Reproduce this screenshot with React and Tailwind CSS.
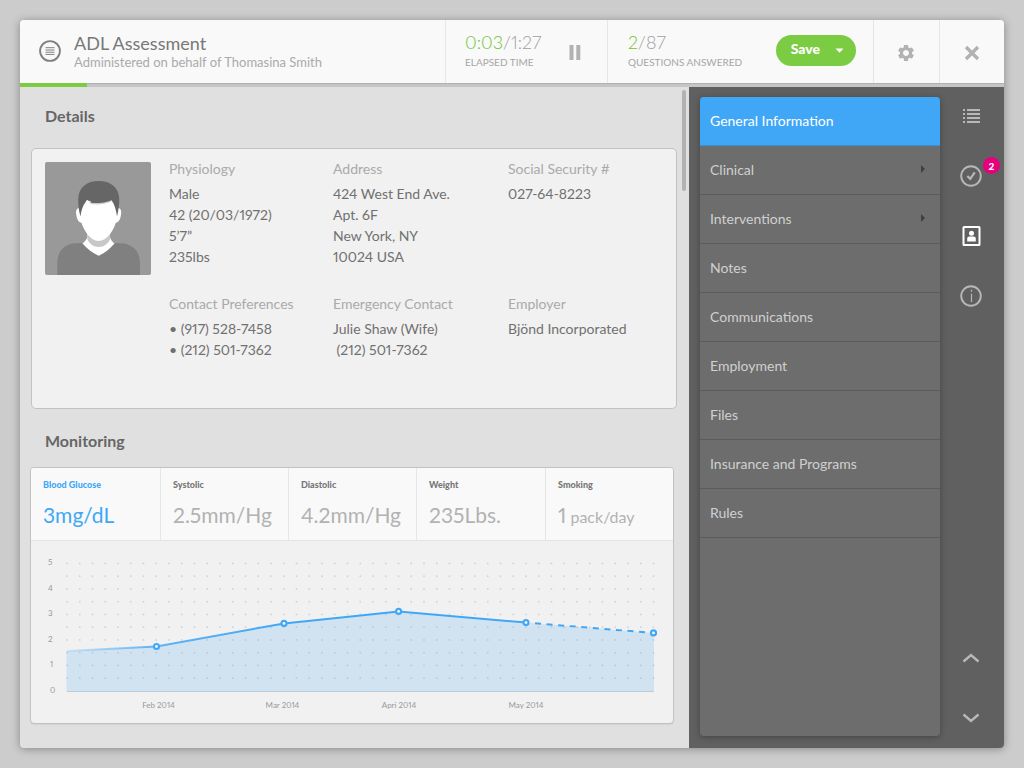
import React from "react";
import { MdSettings } from "react-icons/md";

const details = [
  { label: "Physiology", lines: ["Male", "42 (20/03/1972)", "5’7”", "235lbs"] },
  { label: "Address", lines: ["424 West End Ave.", "Apt. 6F", "New York, NY", "10024 USA"] },
  { label: "Social Security #", lines: ["027-64-8223"] },
  { label: "Contact Preferences", lines: ["• (917) 528-7458", "• (212) 501-7362"] },
  { label: "Emergency Contact", lines: ["Julie Shaw (Wife)", "\u00a0(212) 501-7362"] },
  { label: "Employer", lines: ["Bjönd Incorporated"] },
];

const metrics = [
  { label: "Blood Glucose", value: "3mg/dL", active: true },
  { label: "Systolic", value: "2.5mm/Hg" },
  { label: "Diastolic", value: "4.2mm/Hg" },
  { label: "Weight", value: "235Lbs." },
  { label: "Smoking", value: "1", unit: "pack/day" },
];

const sections = [
  { label: "General Information", active: true },
  { label: "Clinical", nested: true },
  { label: "Interventions", nested: true },
  { label: "Notes" },
  { label: "Communications" },
  { label: "Employment" },
  { label: "Files" },
  { label: "Insurance and Programs" },
  { label: "Rules" },
];

function Header() {
  return (
    <header className="flex h-[63px] items-stretch rounded-t-[4px] bg-[#f9f9f9]">
      <div className="flex min-w-0 flex-1 items-center gap-[13px] pb-[2px] pl-[19px]">
        <button type="button" aria-label="Open menu" className="shrink-0">
          <svg width="22" height="22" viewBox="0 0 22 22" fill="none" stroke="#808080">
            <circle cx="11" cy="11" r="9.9" strokeWidth="1.9" />
            <path d="M6.5 7.7h9M6.5 10h9M6.5 12.2h9M6.5 14.4h9" strokeWidth="1" />
          </svg>
        </button>
        <div className="min-w-0 pt-[3px]">
          <h1 className="truncate text-[18px] leading-[20px] text-[#777]">ADL Assessment</h1>
          <p className="truncate text-[13px] leading-[18px] text-[#aaa]">
            Administered on behalf of Thomasina Smith
          </p>
        </div>
      </div>

      <div className="flex w-[162px] items-center justify-between border-l border-[#e6e6e6] pr-[26px] pl-[19px]">
        <Stat value="0:03" total="1:27" label="Elapsed Time" />
        <button type="button" aria-label="Pause" className="pt-[2px]">
          <svg width="12" height="15" viewBox="0 0 12 15" fill="#b2b2b2">
            <rect x="0.5" width="4" height="15" />
            <rect x="7.3" width="4" height="15" />
          </svg>
        </button>
      </div>

      <div className="flex w-[266px] items-center justify-between border-l border-[#e6e6e6] pr-[17px] pl-[20px]">
        <Stat value="2" total="87" label="Questions Answered" />
        <div className="mb-[2px] flex h-[31px] items-stretch rounded-full bg-[#7bcc43] text-white">
          <button type="button" className="rounded-l-full pb-[4px] pl-[15px] text-[14px] font-black">
            Save
          </button>
          <button type="button" aria-label="More save options" className="rounded-r-full pr-[12px] pl-[15px]">
            <svg width="9" height="5" viewBox="0 0 9 5" fill="currentColor">
              <path d="M0.5 0.5h8L4.5 4.8z" />
            </svg>
          </button>
        </div>
      </div>

      <button
        type="button"
        aria-label="Settings"
        className="flex w-[66px] items-center justify-center border-l border-[#e6e6e6] pt-[2px] pr-px text-[#b2b2b2]"
      >
        <MdSettings size={20} />
      </button>
      <button
        type="button"
        aria-label="Close"
        className="flex w-[65px] items-center justify-center border-l border-[#e6e6e6] pt-[2px] pr-px"
      >
        <svg width="16" height="16" viewBox="0 0 16 16" stroke="#b2b2b2" strokeWidth="3.4">
          <path d="M2 2l12 12M14 2L2 14" />
        </svg>
      </button>
    </header>
  );
}

function Stat({ value, total, label }) {
  return (
    <div className="pb-px">
      <p className="text-[18px] leading-[22px] font-light text-[#a0a0a0] proportional-nums">
        <span className="text-[#6cc52f]">{value}</span>/{total}
      </p>
      <p className="text-[10px] leading-[18px] whitespace-nowrap text-[#a6a6a6] uppercase">{label}</p>
    </div>
  );
}

function Avatar() {
  return (
    <svg
      role="img"
      aria-label="Patient portrait"
      className="mt-[4px] shrink-0 rounded-[2px]"
      width="106"
      height="113"
      viewBox="0 0 106 113"
    >
      <rect width="106" height="113" fill="#999" />
      <path d="M12.3 113V101C12.3 90 19 81.5 31 81.3L40 81H67L76 81.3C88 81.5 95 90 95 101V113Z" fill="#808080" />
      <path d="M42.3 71V75C41.5 78 39.5 80 37.5 81.5C42 87 48 91 53.7 93.7C59.5 91 65 87 69.5 81.5C67.5 80 65.5 78 65 75V71Z" fill="#fff" />
      <path d="M42.3 72V77C44 81.500 48.500 85 53.700 85S63.500 81.500 65 77V72Z" fill="#c8c8c8" />
      <path d="M34.500 46C31.500 46 30.700 49 31.200 52C31.700 56 33 60.500 36.500 60.800C39 69 45.500 79 53.700 79S68.300 69 70.800 60.800C74.300 60.500 75.600 56 76.100 52C76.600 49 75.800 46 72.800 46L68 34H39Z" fill="#fff" />
      <path d="M44 40L66 38L66.500 39.500C60 42.500 51 43 46 42Z" fill="#ccc" />
      <path d="M35.400 54.500C33.500 47 33 41 33.300 36C34 25 42 19 53.700 19S73.500 25 74.200 36C74.500 41 73.800 47 72 54.500C71.200 48 69.500 42 66.500 38.200C60.500 40.800 52 41.500 46.200 40.800L45 38.500L44.600 39.600L42 37.800L40.500 40.200C37.800 43.500 36.200 49 35.400 54.500Z" fill="#666" />
    </svg>
  );
}

function Details() {
  return (
    <section>
      <h2 className="pl-[14px] text-[16px] leading-[20px] font-bold text-[#666]">Details</h2>
      <div className="mt-[22px] mr-[1px] flex gap-[18px] rounded-[5px] border border-[#c2c2c2] bg-[#f1f1f1] px-[13px] pt-[9px] pb-[48px]">
        <Avatar />
        <dl className="grid min-w-0 flex-1 grid-cols-[164px_175px_1fr] gap-y-[26px] text-[14px] leading-[21px] proportional-nums">
          {details.map((d) => (
            <div key={d.label}>
              <dt className="mb-[4px] text-[#aaa]">{d.label}</dt>
              {d.lines.map((line) => (
                <dd key={line} className="text-[#707070]">
                  {line}
                </dd>
              ))}
            </div>
          ))}
        </dl>
      </div>
    </section>
  );
}

const STEP = 12.75;
const columns = Array.from({ length: 47 }, (_, i) => 36 + i * STEP);
const rows = Array.from({ length: 10 }, (_, i) => 22.4 + i * STEP);
const points = [
  [125.5, 105.5],
  [253, 82.4],
  [367.6, 70.4],
  [495, 81.6],
  [622.5, 91.9],
];
const scale = [
  [5, 17, 24],
  [4, 17, 50],
  [3, 17, 75],
  [2, 17, 101],
  [1, 19, 126],
  [0, 19, 152],
];
const months = [
  ["Feb 2014", 127.5],
  ["Mar 2014", 251.5],
  ["Apri 2014", 368],
  ["May 2014", 495],
];

function Chart() {
  return (
    <svg className="block w-full" viewBox="0 0 642 182" role="img" aria-label="Blood glucose by month">
      <defs>
        <linearGradient id="fade" gradientUnits="userSpaceOnUse" x1="36" y1="0" x2="253" y2="0">
          <stop offset="0" stopColor="#40a7f6" stopOpacity="0.15" />
          <stop offset="0.4" stopColor="#40a7f6" stopOpacity="0.8" />
          <stop offset="1" stopColor="#40a7f6" />
        </linearGradient>
      </defs>
      <g fill="#d2d2d2">
        {rows.map((y) => columns.map((x) => <circle key={`${x}-${y}`} cx={x} cy={y} r="0.9" />))}
      </g>
      <path
        d="M35.500 110L125.500 105.500L253 82.400L367.600 70.400L495 81.600L623 91.900V150.500H35.500Z"
        fill="#40a7f6"
        fillOpacity="0.175"
      />
      <path d="M36 150.500H623" stroke="#bccbd6" />
      <path
        d="M36 110L125.500 105.500L253 82.400L367.600 70.400L495 81.600"
        fill="none"
        stroke="url(#fade)"
        strokeWidth="2"
      />
      <path d="M504 82.300L617 91.500" stroke="#40a7f6" strokeWidth="2" strokeDasharray="6 5.600" />
      {points.map(([x, y]) => (
        <circle key={x} cx={x} cy={y} r="2.5" fill="#f5faff" stroke="#40a7f6" strokeWidth="2.1" />
      ))}
      <g className="fill-[#999] text-[8px] proportional-nums">
        {scale.map(([n, x, y]) => (
          <text key={n} x={x} y={y}>
            {n}
          </text>
        ))}
        {months.map(([name, x]) => (
          <text key={name} x={x} y="167" textAnchor="middle">
            {name}
          </text>
        ))}
      </g>
    </svg>
  );
}

function Monitoring() {
  return (
    <section className="mt-[22px]">
      <h2 className="pl-[14px] text-[16px] leading-[20px] font-bold text-[#666]">Monitoring</h2>
      <div className="mt-[16px] mr-[4px] -ml-px overflow-hidden rounded-[4px] border border-[#c2c2c2] bg-[#f1f1f1] shadow-[0_1px_1px_rgba(0,0,0,0.06)]">
        <div
          role="tablist"
          aria-label="Measurements"
          className="grid grid-cols-[130fr_128fr_128fr_129fr_127fr] divide-x divide-[#e6e6e6] border-b border-[#e4e4e4] bg-[#f9f9f9]"
        >
          {metrics.map((m) => (
            <button
              key={m.label}
              type="button"
              role="tab"
              aria-selected={Boolean(m.active)}
              className={`flex h-[72px] flex-col items-start pt-[11px] pl-[12px] whitespace-nowrap ${
                m.active ? "text-[#40a7f6]" : "text-[#b2b2b2]"
              }`}
            >
              <span className={`text-[9px] leading-[12px] font-black ${m.active ? "" : "text-[#777]"}`}>{m.label}</span>
              <span className="mt-[10px] text-[21px] leading-[28px] proportional-nums">
                {m.value}
                {m.unit && <span className="text-[16px]"> {m.unit}</span>}
              </span>
            </button>
          ))}
        </div>
        <Chart />
      </div>
    </section>
  );
}

function SectionMenu() {
  return (
    <nav
      aria-label="Sections"
      className="w-[240px] shrink-0 self-stretch overflow-hidden rounded-[4px] bg-[#6d6d6d] shadow-[0_1px_6px_rgba(0,0,0,0.3)]"
    >
      <ul>
        {sections.map((s) => (
          <li key={s.label}>
            <a
              href="#"
              aria-current={s.active ? "page" : undefined}
              className={`flex h-[49px] items-center justify-between border-b pr-[15px] pb-[2px] pl-[10px] text-[14px] ${
                s.active ? "border-[#3c8fcf] bg-[#40a7f6] text-white" : "border-[#5b5b5b] text-[#d0d0d0]"
              }`}
            >
              {s.label}
              {s.nested && (
                <svg width="4" height="8" viewBox="0 0 4 8" fill="#404040">
                  <path d="M0 0L4 4L0 8z" />
                </svg>
              )}
            </a>
          </li>
        ))}
      </ul>
    </nav>
  );
}

function RailButton({ label, children }) {
  return (
    <button type="button" aria-label={label} className="relative flex size-[40px] items-center justify-center">
      {children}
    </button>
  );
}

function Rail() {
  return (
    <div className="flex w-[64px] shrink-0 flex-col items-center justify-between pt-[9px] pr-[2px] pb-[10px]">
      <div className="flex flex-col gap-[20px]">
        <RailButton label="Questions">
          <svg width="17" height="14" viewBox="0 0 17 14" fill="#b8b8b8">
            <path d="M0 0h2v2H0zM4 0h13v2H4zM0 4h2v2H0zM4 4h13v2H4zM0 8h2v2H0zM4 8h13v2H4zM0 12h2v2H0zM4 12h13v2H4z" />
          </svg>
        </RailButton>
        <RailButton label="Tasks, 2 pending">
          <svg width="22" height="22" viewBox="0 0 22 22" fill="none" stroke="#b8b8b8">
            <circle cx="11" cy="11" r="9.8" strokeWidth="1.9" />
            <path d="M7.3 11L10.200 13.800L14.800 7.400" strokeWidth="2.2" />
          </svg>
          <span className="absolute top-px -right-[9px] flex size-[17px] items-center justify-center rounded-full bg-[#e6007e] text-[10px] leading-none font-black text-white">
            2
          </span>
        </RailButton>
        <RailButton label="Patient profile">
          <svg width="19" height="20" viewBox="0 0 19 20">
            <rect x="1.5" y="1" width="16" height="18" rx="0.5" fill="none" stroke="#fff" strokeWidth="2" />
            <circle cx="9.500" cy="7.200" r="2.500" fill="#fff" />
            <path d="M5.200 15.500V12.500Q5.200 10.500 7.200 10.500H11.800Q13.800 10.500 13.800 12.500V15.500Z" fill="#fff" />
          </svg>
        </RailButton>
        <RailButton label="Information">
          <svg width="22" height="22" viewBox="0 0 22 22" fill="none" stroke="#b8b8b8">
            <circle cx="11" cy="11" r="9.800" strokeWidth="1.900" />
            <path d="M11.500 4.800V6.800M11.500 8.800V17" strokeWidth="1.200" />
          </svg>
        </RailButton>
      </div>
      <div className="flex flex-col gap-[20px]">
        <RailButton label="Previous">
          <svg width="18" height="10" viewBox="0 0 18 10" fill="none" stroke="#b8b8b8" strokeWidth="2.4">
            <path d="M1.500 8.500L9 2L16.500 8.500" />
          </svg>
        </RailButton>
        <RailButton label="Next">
          <svg width="18" height="10" viewBox="0 0 18 10" fill="none" stroke="#b8b8b8" strokeWidth="2.4">
            <path d="M1.500 1.500L9 8L16.500 1.500" />
          </svg>
        </RailButton>
      </div>
    </div>
  );
}

export default function App() {
  return (
    <div className="flex min-h-screen flex-col bg-[#ccc] p-5 font-['Lato','Liberation_Sans',sans-serif]">
      <div className="flex flex-1 flex-col rounded-[4px] bg-[#e0e0e0] shadow-[0_1px_8px_rgba(0,0,0,0.35)]">
        <Header />
        <div
          role="progressbar"
          aria-label="Assessment progress"
          aria-valuemin={0}
          aria-valuemax={100}
          aria-valuenow={7}
          className="h-[4px] border-t border-[#b0b0b0] bg-[#c5c5c5]"
        >
          <div className="-mt-px h-[4px] w-[6.8%] bg-[#7bcc43]" />
        </div>
        <div className="flex flex-1">
          <main className="relative min-w-0 flex-1 pt-[19px] pr-[11px] pb-[24px] pl-[11px]">
            <Details />
            <Monitoring />
            <div aria-hidden="true" className="absolute top-[3px] right-[3px] h-[101px] w-[4px] rounded-full bg-[#b2b2b2]" />
          </main>
          <aside className="flex shrink-0 rounded-br-[4px] bg-[#606060] pl-[11px]">
            <div className="flex pt-[10px] pb-[12px]">
              <SectionMenu />
            </div>
            <Rail />
          </aside>
        </div>
      </div>
    </div>
  );
}
